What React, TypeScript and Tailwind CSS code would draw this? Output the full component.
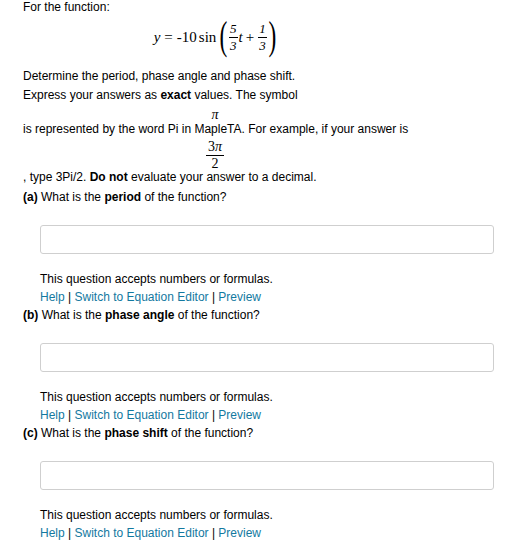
import React from 'react';

const serif = { fontFamily: '"Liberation Serif", "DejaVu Serif", serif' };

const Frac: React.FC<{ num: string; den: string }> = ({ num, den }) => (
  <span className="inline-flex flex-col items-center mx-[1px] text-[13px] leading-[12px] italic">
    <span className="px-[1px] pb-[2px] border-b border-black">{num}</span>
    <span className="px-[1px] pt-[2px]">{den}</span>
  </span>
);

const Paren: React.FC<{ ch: string }> = ({ ch }) => (
  <span className="inline-block text-[26px] leading-none scale-y-[1.5] scale-x-[0.9] font-light">{ch}</span>
);

const Part: React.FC<{ label: string; before: string; bold: string }> = ({ label, before, bold }) => (
  <div>
    <div className="leading-[18px]">
      <span className="font-bold">{label}</span> {before}
      <span className="font-bold">{bold}</span> of the function?
    </div>
    <div className="ml-[17px] mt-[19px] w-[454px] h-[29px] rounded-[3px] border border-[#cfcfcf] bg-white" />
    <div className="ml-[17px] mt-[16px] leading-[18px]">This question accepts numbers or formulas.</div>
    <div className="ml-[17px] leading-[18px]">
      <span className="text-[#13799f]">Help</span> | <span className="text-[#13799f]">Switch to Equation Editor</span> |{' '}
      <span className="text-[#13799f]">Preview</span>
    </div>
  </div>
);

export default function App() {
  return (
    <div
      className="w-[505px] h-[550px] bg-white text-black text-[12px] pl-[23px] overflow-hidden"
      style={{ fontFamily: '"Liberation Sans", Arial, sans-serif' }}
    >
      <div className="leading-[14px]">For the function:</div>

      <div className="w-[384px] h-[34px] mt-[6px] flex items-center justify-center text-[15px]" style={serif}>
        <span className="italic">y</span>
        <span className="mx-[4px]">=</span>
        <span>-10</span>
        <span className="ml-[2px] mr-[3px]">sin</span>
        <Paren ch="(" />
        <Frac num="5" den="3" />
        <span className="italic">t</span>
        <span className="mx-[3px]">+</span>
        <Frac num="1" den="3" />
        <Paren ch=")" />
      </div>

      <div className="mt-[13px] leading-[18px]">Determine the period, phase angle and phase shift.</div>
      <div className="mt-[1px] leading-[18px]">
        Express your answers as <span className="font-bold">exact</span> values. The symbol
      </div>
      <div className="w-[384px] h-[16px] mt-[2px] flex items-center justify-center text-[14px] italic" style={serif}>
        π
      </div>
      <div className="leading-[14px]">is represented by the word Pi in MapleTA. For example, if your answer is</div>
      <div className="w-[384px] h-[34px] pt-[2px] flex justify-center text-[14px]" style={serif}>
        <span className="inline-flex flex-col items-center">
          <span className="px-[2px] h-[18px] leading-[17px] border-b border-black">
            3<span className="italic">π</span>
          </span>
          <span className="h-[14px] leading-[14px] mt-[1px]">2</span>
        </span>
      </div>
      <div className="leading-[14px]">
        , type 3Pi/2. <span className="font-bold">Do not</span> evaluate your answer to a decimal.
      </div>

      <div className="mt-[4px] flex flex-col">
        <Part label="(a)" before="What is the " bold="period" />
        <Part label="(b)" before="What is the " bold="phase angle" />
        <Part label="(c)" before="What is the " bold="phase shift" />
      </div>
    </div>
  );
}
